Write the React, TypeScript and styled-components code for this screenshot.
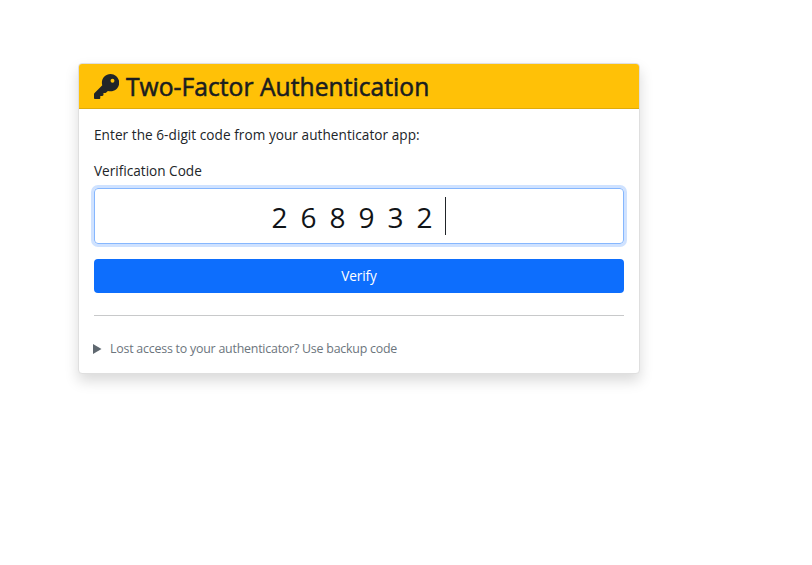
import React from 'react';
import styled, { createGlobalStyle } from 'styled-components';
import { FaKey } from 'react-icons/fa6';

const GlobalStyle = createGlobalStyle`
  *, *::before, *::after { box-sizing: border-box; }
  body {
    margin: 0;
    background: #fff;
    color: #212529;
    font-family: 'Segoe UI', 'Open Sans', 'Noto Sans', sans-serif;
    font-size: 13.6px;
    line-height: 22px;
  }
`;

const Page = styled.main`
  min-height: 565px;
  padding: 63px 0 0 78px;
`;

const Card = styled.section`
  width: 562px;
  height: 311px;
  background: #fff;
  border: 1px solid #dfdfdf;
  border-radius: 4px;
  box-shadow: 0 7px 14px rgba(0, 0, 0, 0.15);
`;

const Header = styled.header`
  display: flex;
  align-items: center;
  height: 45px;
  padding: 0 14px;
  background: #ffc107;
  border-bottom: 1px solid #dfab0b;
  border-radius: 3px 3px 0 0;
`;

const KeyIcon = styled(FaKey)`
  width: 25.2px;
  height: 25.2px;
  flex: none;
  margin: 1.4px 6.8px 0 1px;
`;

const Title = styled.h1`
  margin: 2px 0 0;
  font-size: 24.6px;
  font-weight: 400;
  line-height: 30px;
  letter-spacing: 0.05px;
  white-space: nowrap;
  color: #1a1d20;
  -webkit-text-stroke: 0.55px #1a1d20;
`;

const Body = styled.div`
  display: flex;
  flex-direction: column;
  padding: 15px 15px 0;
`;

const Text = styled.p`
  margin: 0 0 14px;
  letter-spacing: 0.05px;
`;

const Label = styled.label`
  display: block;
  margin-bottom: 6px;
`;

const CodeField = styled.div`
  display: flex;
  align-items: center;
  justify-content: center;
  height: 56px;
  margin-bottom: 15px;
  padding-right: 2px;
  border: 1px solid #86b7fe;
  border-radius: 4px;
  box-shadow: 0 0 0 3px #cfe2ff;
`;

const Digit = styled.span`
  width: 29px;
  padding: 2px 0 0 1px;
  font-size: 28px;
  line-height: 38px;
  color: #111417;
`;

const Caret = styled.span`
  width: 1px;
  height: 38px;
  background: #212529;
`;

const Button = styled.button`
  height: 34px;
  padding: 0;
  border: 0;
  border-radius: 4px;
  background: #0d6efd;
  color: #fff;
  font: inherit;
  letter-spacing: -0.1px;
`;

const Divider = styled.hr`
  width: 100%;
  height: 1px;
  margin: 22px 0 23px;
  border: 0;
  background: #c8c9ca;
`;

const Backup = styled.div`
  display: flex;
  align-items: center;
  height: 20px;
  color: #6c757d;
  font-size: 12.4px;
  line-height: 20px;
  letter-spacing: -0.22px;
`;

const Triangle = styled.svg`
  width: 9px;
  height: 10px;
  margin: -1px 8px 0 -1px;
  color: #5f6870;
`;

export default function App() {
  return (
    <>
      <GlobalStyle />
      <Page>
        <Card>
          <Header>
            <KeyIcon />
            <Title>Two-Factor Authentication</Title>
          </Header>
          <Body>
            <Text>Enter the 6-digit code from your authenticator app:</Text>
            <Label>Verification Code</Label>
            <CodeField>
              {'268932'.split('').map((d, i) => <Digit key={i}>{d}</Digit>)}
              <Caret />
            </CodeField>
            <Button type="button">Verify</Button>
            <Divider />
            <Backup>
              <Triangle viewBox="0 0 9 10"><path d="M0 0 8.5 5 0 10z" fill="currentColor" /></Triangle>
              <span>Lost access to your authenticator? Use backup code</span>
            </Backup>
          </Body>
        </Card>
      </Page>
    </>
  );
}
